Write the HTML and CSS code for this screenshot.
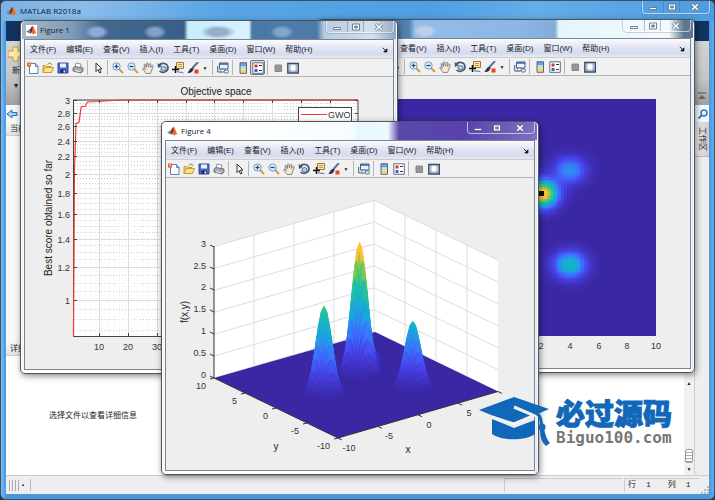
FILE: index.html
```html
<!DOCTYPE html>
<html lang="zh-CN">
<head>
<meta charset="utf-8">
<title>MATLAB R2018a</title>
<link rel="stylesheet" href="styles.css">
</head>
<body>
<svg class="sprite" aria-hidden="true">
  <symbol id="logo" viewBox="0 0 12 12"><path d="M0 7l3.500-1.800L5.500 7 3.500 9z" fill="#3f8fc0"/><path d="M3.500 5.200C5 4.500 6 1 7 1c1 0 1.500 3 1 4.500L5.500 9 3.500 9l1.500-2z" fill="#8c2418"/><path d="M7 1c1.500 0 2.500 5 5 8.500-2-1-3-.5-4 1.500C7.500 9.500 7 8.500 5.500 9 7.500 7 7 4 7 1z" fill="#e8702a"/></symbol>
  <symbol id="new" viewBox="0 0 12 12"><path d="M2.500 1.500h6l2.500 2.500v7.500h-8.500z" fill="#fff" stroke="#5b82b5"/><path d="M8.500 1.500v3h2.500" fill="#cfe0f4" stroke="#5b82b5"/><path d="M0 .5h4v4h-4z" fill="#e8603c"/><path d="M1.500 1.500h1.500v1.500h-1.500z" fill="#ffd76a"/></symbol>
  <symbol id="open" viewBox="0 0 12 12"><path d="M1 10.500v-7h3l1 1h4v2" fill="#f6d36b" stroke="#c99a2e"/><path d="M1 10.500l2-5h8.500l-2 5z" fill="#ffe58a" stroke="#c99a2e"/><path d="M5.500 2.500c2-2 4-1.500 4.500.5" fill="none" stroke="#5a8b46"/></symbol>
  <symbol id="save" viewBox="0 0 12 12"><path d="M1 1h10v10h-10z" fill="#4a68c8" stroke="#3448a0"/><path d="M3 1.500h6v4h-6z" fill="#e8f0fb"/><path d="M3.500 7.500h5v3.500h-5z" fill="#1d2758"/><path d="M6.500 8.500h1.500v2h-1.500z" fill="#fff"/></symbol>
  <symbol id="print" viewBox="0 0 12 12"><path d="M3 5l1-4 5 1-.5 4" fill="#fff" stroke="#8b8f97"/><path d="M1 6l2-1.500 8 1.500v3l-2 2-8-2z" fill="#a8acb2" stroke="#6e7278"/><path d="M3 8.500l5 1.200" stroke="#eee"/></symbol>
  <symbol id="arrow" viewBox="0 0 12 12"><path d="M4 1v8.500l2-2 1.500 3.500 1.500-.7-1.500-3.300h2.500z" fill="#fff" stroke="#333"/></symbol>
  <symbol id="zin" viewBox="0 0 12 12"><path d="M7 7l4 4" stroke="#d99a3a" stroke-width="2"/><circle cx="4.500" cy="4.500" r="3.700" fill="#d5ecfb" stroke="#6da0cf"/><path d="M2.500 4.500h4M4.500 2.500v4" stroke="#24406e" stroke-width="1.200"/></symbol>
  <symbol id="zout" viewBox="0 0 12 12"><path d="M7 7l4 4" stroke="#d99a3a" stroke-width="2"/><circle cx="4.500" cy="4.500" r="3.700" fill="#d5ecfb" stroke="#6da0cf"/><path d="M2.500 4.500h4" stroke="#24406e" stroke-width="1.200"/></symbol>
  <symbol id="pan" viewBox="0 0 12 12"><path d="M4 11.500L.8 7c-.3-1 1-1 1.400-.4l1 1L2 3c0-1 1.200-1 1.400 0l1 2.500L4.500 1.500c0-1 1.500-1 1.500 0l.3 3.500L7.500 2c.4-1 1.600-.6 1.400.2L8.400 5.500l1.500-2c.6-.7 1.500 0 1.200.7L9.500 9l-1 2.500z" fill="#fbe6c8" stroke="#64728c" stroke-width=".8"/></symbol>
  <symbol id="rot" viewBox="0 0 12 12"><path d="M2 3.500C4.500 0 10.500 1 11 5.500c.3 4-5 6.500-8.500 3.500" fill="none" stroke="#3c5878" stroke-width="1.600"/><path d="M.5 1l.5 5 4-2z" fill="#3c5878"/><path d="M4 5.500l2.500-1 2.500 1v2.500l-2.500 1-2.500-1z" fill="#bccede" stroke="#3c5878" stroke-width=".8"/></symbol>
  <symbol id="cursor" viewBox="0 0 12 12"><path d="M4.500.5h7v6h-7z" fill="#ffe7a0" stroke="#9b7a3c"/><path d="M6 2.500h4M6 4.500h4" stroke="#9b7a3c" stroke-width=".7"/><path d="M0 7.500h7M3.500 4v7" stroke="#111" stroke-width="1.500"/><path d="M5 9.500c3 1.500 5 0 6.500 1.500" fill="none" stroke="#4865c8"/></symbol>
  <symbol id="brush" viewBox="0 0 12 12"><path d="M11 0L5.500 6" stroke="#5a7398" stroke-width="2"/><path d="M6.500 6C4 4.500 2 8 .5 11c2.500.3 6-1 6-5z" fill="#273250"/><path d="M7.500 7.500h4v4h-4z" fill="#f0421c"/></symbol>
  <symbol id="link" viewBox="0 0 12 12"><path d="M2.500 1h8.500v6h-8.500z" fill="#e9f2fc" stroke="#3f5f8d"/><path d="M2.500 2h8.500" stroke="#3f5f8d" stroke-width="1.500"/><path d="M.7 4v6h5" fill="none" stroke="#3f5f8d"/><rect x="3.500" y="7" width="4" height="3" rx="1.500" fill="#fff" stroke="#566e88"/><rect x="7" y="8" width="4.500" height="3" rx="1.500" fill="none" stroke="#566e88"/></symbol>
  <symbol id="cbar" viewBox="0 0 12 12"><path d="M3 1h6.500v3.500h-6.500z" fill="#749dd8"/><path d="M3 4.500h6.500v3h-6.500z" fill="#b9e2d8"/><path d="M3 7.500h6.500v3.500h-6.500z" fill="#ffd467"/><path d="M3 .7h6.500v10.600h-6.500z" fill="none" stroke="#52668c"/></symbol>
  <symbol id="legend" viewBox="0 0 12 12"><path d="M.8.800h10.500v10.500h-10.500z" fill="#fff" stroke="#5a6e95"/><path d="M2.500 2.500h3v3h-3z" fill="#d43b30"/><path d="M2.500 7h3v3h-3z" fill="#3e5fb8"/><path d="M7 3.500h3M7 8.500h3" stroke="#333"/></symbol>
  <symbol id="hide" viewBox="0 0 12 12"><path d="M3 3h6.500v6.500h-6.500z" fill="#989898" stroke="#868686"/></symbol>
  <symbol id="dock" viewBox="0 0 12 12"><path d="M.8 1.500h10.500v9.500h-10.500z" fill="#dbe6f2" stroke="#34496b" stroke-width="1.400"/><path d="M3 2v8M9 2v8M1 9h10" stroke="#6c84a6" stroke-width=".8"/><path d="M3.500 3.500h5v5h-5z" fill="#fff"/></symbol>
  <symbol id="min" viewBox="0 0 10 8"><path d="M1.500 4.500h7v2h-7z" fill="#fff" stroke="#566579" stroke-width=".8"/></symbol>
  <symbol id="max" viewBox="0 0 10 8"><path d="M1.500 1h7v6h-7z" fill="#fff" stroke="#566579" stroke-width=".8"/><path d="M3.700 3h2.600v2h-2.600z" fill="#9ab" stroke="#566579" stroke-width=".8"/></symbol>
  <symbol id="close" viewBox="0 0 10 8"><path d="M2 1.200l6 5.600M8 1.200L2 6.800" stroke="#566579" stroke-width="2.800"/><path d="M2.200 1.400l5.600 5.200M7.800 1.400L2.200 6.600" stroke="#fff" stroke-width="1.500"/></symbol>
  <symbol id="pin" viewBox="0 0 8 8"><path d="M1 1l4 4M6.500 2.500v4h-4z" stroke="#111" fill="#111" stroke-width="1.200"/></symbol>
</svg>

<div class="app">
  <header class="app-title">
    <svg class="ico"><use href="#logo"/></svg>
    <h1>MATLAB R2018a</h1>
    <div class="caption"><button aria-label="最小化"><svg><use href="#min"/></svg></button><button aria-label="最大化"><svg><use href="#max"/></svg></button><button aria-label="关闭"><svg><use href="#close"/></svg></button></div>
  </header>
  <div class="ribbon-tabs"></div>
  <div class="ribbon">
    <button class="new-btn"><svg viewBox="0 0 16 16"><path d="M5 1h5v4h5v6h-5v4h-5v-4h-5v-6h5z" fill="#ffe9a5" stroke="#c2984a"/></svg>新<span>▾</span></button>
    <button class="collapse" aria-label="折叠工具条"><svg viewBox="0 0 8 8"><path d="M0 1h8" stroke="#666" stroke-width="1.300"/><path d="M4 3l4 4h-8z" fill="#666"/></svg></button>
  </div>
  <div class="address">
    <button aria-label="后退"><svg viewBox="0 0 12 10"><path d="M1 5l5-4v2.500h5v3h-5v2.500z" fill="#a6d3f7" stroke="#2d6ba8"/></svg></button>
    <button aria-label="搜索"><svg viewBox="0 0 12 10"><circle cx="7" cy="4" r="3" fill="#e4f3ff" stroke="#2f7bc4" stroke-width="1.500"/><path d="M5 6L1.500 9.500" stroke="#2f7bc4" stroke-width="2"/></svg></button>
  </div>
  <div class="work">
    <aside class="files">
      <h2>当前</h2>
      <div class="file-list"></div>
      <h2 class="detail-head">详细</h2>
      <p class="detail">选择文件以查看详细信息</p>
    </aside>
    <main class="editor"></main>
    <div class="scroll"><span>▲</span><i></i><span>▼</span></div>
    <nav class="side"><button>工作区</button></nav>
  </div>
  <footer class="status">
    <span class="grip"></span><span class="up">▲</span>
    <span class="cell msg"></span>
    <span class="cell pos"><span>行</span><span>1</span><span>列</span><span>1</span></span>
    <svg class="size-grip" viewBox="0 0 8 8"><path d="M6 0h2v2h-2zM3 3h2v2h-2zM6 3h2v2h-2zM0 6h2v2h-2zM3 6h2v2h-2zM6 6h2v2h-2z" fill="#bbb"/></svg>
  </footer>
</div>

<section class="win win-map">
  <header class="win-title"><div class="caption"><button aria-label="最小化"><svg><use href="#min"/></svg></button><button aria-label="最大化"><svg><use href="#max"/></svg></button><button aria-label="关闭"><svg><use href="#close"/></svg></button></div></header>
  <div class="client">
    <nav class="menu"><button>文件(F)</button><button>编辑(E)</button><button>查看(V)</button><button>插入(I)</button><button>工具(T)</button><button>桌面(D)</button><button>窗口(W)</button><button>帮助(H)</button><svg class="pin"><use href="#pin"/></svg></nav>
    <div class="tools"></div>
    <svg class="plot" id="map" viewBox="322 76 368 292"><rect x="369" y="99" width="287" height="237" fill="#3a27a3"/><g class="cells" shape-rendering="crispEdges"></g><rect x="539" y="191" width="5" height="5" fill="#111"/><g class="ticks"></g></svg>
  </div>
</section>

<section class="win win-curve">
  <header class="win-title"><svg class="ico"><use href="#logo"/></svg><h2>Figure 1</h2><div class="caption"><button aria-label="最小化"><svg><use href="#min"/></svg></button><button aria-label="最大化"><svg><use href="#max"/></svg></button><button aria-label="关闭"><svg><use href="#close"/></svg></button></div></header>
  <div class="client">
    <nav class="menu"><button>文件(F)</button><button>编辑(E)</button><button>查看(V)</button><button>插入(I)</button><button>工具(T)</button><button>桌面(D)</button><button>窗口(W)</button><button>帮助(H)</button><svg class="pin"><use href="#pin"/></svg></nav>
    <div class="tools legend-on"></div>
    <svg class="plot" id="curve" viewBox="25 77 368 292">
      <rect x="73" y="100" width="285" height="236" fill="#fff"/>
      <g class="grid"></g>
      <path d="M73.500 100v236.500H358V100z" fill="none" stroke="#444"/>
      <path d="M73.500 336L74.500 170 76 123.500 79 122.500 81 108 82 106.500h3L87.500 102l11-.5 22-1.500H358" fill="none" stroke="#f23b30" stroke-width="1.200"/>
      <g class="ticks"></g>
      <text class="label" x="216" y="95" text-anchor="middle">Objective space</text>
      <text class="label" transform="translate(52 218) rotate(-90)" text-anchor="middle">Best score obtained so far</text>
      <rect x="298.500" y="107.500" width="53" height="15" fill="#fff" stroke="#444"/>
      <path d="M301 114.500h26" stroke="#f23b30"/>
      <text x="328" y="118">GWO</text>
    </svg>
  </div>
</section>

<section class="win win-surf">
  <header class="win-title"><svg class="ico"><use href="#logo"/></svg><h2>Figure 4</h2><div class="caption"><button aria-label="最小化"><svg><use href="#min"/></svg></button><button aria-label="最大化"><svg><use href="#max"/></svg></button><button aria-label="关闭"><svg><use href="#close"/></svg></button></div></header>
  <div class="client">
    <nav class="menu"><button>文件(F)</button><button>编辑(E)</button><button>查看(V)</button><button>插入(I)</button><button>工具(T)</button><button>桌面(D)</button><button>窗口(W)</button><button>帮助(H)</button><svg class="pin"><use href="#pin"/></svg></nav>
    <div class="tools"></div>
    <svg class="plot" id="surf" viewBox="166 178 368 292">
      <path d="M214 246.500L375 201l123 59v131.500L375 332l-161 46z" fill="#fff"/>
      <g class="grid"></g>
      <path d="M214 378L338 438l160-46.500L375 332z" fill="#3a27a3"/>
      <g class="cells"></g>
      <path d="M214 246v132L338 438l160-46.500" fill="none" stroke="#333"/>
      <g class="ticks"></g>
      <text class="label" transform="translate(188 312) rotate(-90)" text-anchor="middle">f(x,y)</text>
      <text class="label" x="276" y="450" text-anchor="middle">y</text>
      <text class="label" x="408" y="453" text-anchor="middle">x</text>
    </svg>
  </div>
</section>

<div class="brand">
  <svg viewBox="0 0 72 52"><path d="M0 14L35 1l35 12-35 15.500z" fill="#1268b8"/><path d="M13 23l22 9 21-8v14c-9 7-34 7-43 0z" fill="#1268b8"/><path d="M35 11l20 8.500-20 8.500-22-7" fill="none" stroke="#f2f2f2" stroke-width="3"/><path d="M54 16c6 1 8 5 8.500 12" fill="none" stroke="#1268b8" stroke-width="3"/><circle cx="63" cy="31" r="3.500" fill="#1268b8"/><path d="M61 32h4c1 6 3 12 6 15l-4 3c-5-4-6-11-6-18z" fill="#1268b8"/></svg>
  <div><strong>必过源码</strong><span>Biguo100.com</span></div>
</div>
<script src="plots.js"></script>
</body>
</html>
```
FILE: styles.css
```css
* { box-sizing: border-box; }
body {
  margin: 0;
  position: relative;
  min-height: 100vh;
  overflow: hidden;
  background: #2b3a4a;
  color: #222;
  font: 8px/12px "Liberation Sans", "Noto Sans CJK SC", sans-serif;
}
h1, h2, p { margin: 0; font-weight: 400; }
button {
  margin: 0;
  padding: 0;
  border: 0;
  background: none;
  color: inherit;
  font: inherit;
}
svg { display: block; }
.sprite { position: absolute; width: 0; height: 0; }
.ico { width: 11px; height: 11px; flex: none; }

/* Main application window */
.app {
  display: flex;
  flex-direction: column;
  height: 100vh;
  padding: 0 5px 5px;
  border: 1px solid #3a5068;
  border-radius: 6px;
  background: linear-gradient(90deg, #7cbcf0, #4796de 5px, #4796de calc(100% - 5px), #63b0f0);
}
.app-title {
  display: flex;
  align-items: center;
  gap: 3px;
  height: 20px;
  margin: 0 -5px;
  padding-left: 5px;
  flex: none;
  border-radius: 5px 5px 0 0;
  background: linear-gradient(100deg, #79b2e4, #8bbcea 12%, #5aa5e4 30%, #4f9fe2 60%, #64ade8 75%, #4d9be0);
}
.app-title h1, .win-title h2 { font: 8px/12px "Open Sans", "Noto Sans CJK SC", sans-serif; color: #14202c; }
.caption {
  display: flex;
  align-self: flex-start;
  margin-left: auto;
  height: 13px;
  border: 1px solid #ffffff99;
  border-top: 0;
  border-radius: 0 0 4px 4px;
  outline: 1px solid #4d678544;
}
.caption button { display: flex; align-items: center; justify-content: center; width: 20px; }
.caption button + button { width: 16px; border-left: 1px solid #4d678566; }
.caption button:last-child { width: 30px; }
.caption svg { width: 10px; height: 8px; }
.app-title .caption { margin-right: 4px; }

.ribbon-tabs { height: 20px; flex: none; background: #12325f; }
.ribbon {
  display: flex;
  justify-content: space-between;
  height: 64px;
  flex: none;
  background: linear-gradient(#d4d4d4, #c4c4c4 60%, #a0a0a0);
}
.new-btn { display: flex; flex-direction: column; align-items: center; gap: 3px; width: 20px; padding-top: 5px; }
.new-btn svg { width: 16px; height: 16px; }
.collapse { align-self: flex-end; width: 13px; padding: 0 2px 5px; }
.collapse svg { width: 8px; height: 8px; }
.address { display: flex; justify-content: space-between; align-items: center; height: 17px; flex: none; background: #f5f8fb; }
.address svg { width: 12px; height: 10px; }
.work { display: flex; flex: 1; min-height: 0; background: #fff; }
.files { display: flex; flex-direction: column; width: 174px; }
.files h2 { height: 14px; padding: 0 4px; font-size: 8px; line-height: 13px; border-bottom: 1px solid #ccc; background: linear-gradient(#f8f8f8, #e2e2e2); }
.file-list { flex: 1; background: #f9f9f9; }
.detail { height: 119px; padding-top: 53px; text-align: center; line-height: 14px; }
.editor { flex: 1; }
.scroll {
  display: flex;
  flex-direction: column;
  justify-content: flex-end;
  width: 11px;
  font-size: 5px;
  text-align: center;
  background: #f1f1f1;
  border-right: 1px solid #ccc;
}
.scroll span:first-child { margin-bottom: 60px; }
.scroll i { height: 14px; margin: 0 1px; border: 1px solid #999; border-radius: 2px; background: repeating-linear-gradient(#fff 0 2px, #aaa 2px 3px); }
.side { width: 14px; background: #eee; }
.side button {
  width: 14px;
  height: 35px;
  border-bottom: 1px solid #bbb;
  background: linear-gradient(90deg, #eee, #ccc);
  writing-mode: vertical-rl;
  text-orientation: sideways;
}
.status { display: flex; align-items: center; gap: 2px; height: 19px; flex: none; padding-left: 3px; border-top: 1px solid #ccc; background: #eee; }
.grip { width: 10px; height: 11px; background: repeating-linear-gradient(90deg, #aaa 0 1px, #eee 1px 3px); }
.up { padding-right: 5px; border-right: 1px solid #bbb; font-size: 4px; }
.cell { height: 14px; border: 1px solid #ccc; border-width: 1px 0 0 1px; }
.msg { width: 118px; margin-left: auto; }
.pos { display: flex; gap: 10px; width: 75px; padding-left: 3px; font-family: "Liberation Mono", "Noto Sans CJK SC", monospace; }
.pos span:nth-child(3) { margin-left: 7px; }
.size-grip { width: 8px; height: 8px; align-self: flex-end; }

/* Figure windows floating on the desktop */
.win {
  position: absolute;
  width: 378px;
  padding: 0 4px 4px;
  border: 1px solid #4c5560;
  border-radius: 5px;
  background: linear-gradient(90deg, #eef4f8, #fff 5px, #fff calc(100% - 5px), #d8e6f2);
  box-shadow: 1px 2px 6px #0007, inset 0 0 0 1px #ffffffb0;
}
.win-curve { left: 20px; top: 20px; }
.win-map { left: 317px; top: 19px; }
.win-surf { left: 161px; top: 121px; }
.win-title {
  display: flex;
  align-items: center;
  gap: 3px;
  height: 18px;
  margin: 0 -3px;
  padding-left: 4px;
  border-radius: 4px 4px 0 0;
}
.win-title .ico { background: #fff; }
.win-title .caption { height: 12px; margin-right: 2px; }
.win-curve .win-title {
  background:
    radial-gradient(ellipse 12px 7px at 75px 11px, #8fabd6 50%, transparent),
    radial-gradient(ellipse 12px 7px at 133px 11px, #82a0c4 50%, transparent),
    radial-gradient(ellipse 18px 7px at 196px 11px, #97aecb 50%, transparent),
    radial-gradient(ellipse 12px 7px at 260px 11px, #84a6ca 50%, transparent),
    linear-gradient(90deg, #a6b7c8, #7f9cba 50px, #42698f 80px, #385f8a 162px, #c8edfc 166px, #d9f2fd 227px, #4a79a8 230px, #4d7ba9 295px, #b7cbe0 302px, #d5e0ec 350px, #91a9c4);
}
.win-map .win-title {
  background:
    radial-gradient(ellipse 12px 7px at 106px 11px, #bfd0e6 50%, transparent),
    linear-gradient(90deg, #4f82b2 90px, #93bde8 96px, #8bb7e5 200px, #82add9 236px, #e3f5fc 240px, #f5fafc 350px, #5b7691 365px);
}
.win-surf .win-title { background: linear-gradient(90deg, #fff 80px, #f6fbfc 190px, #e7f8fd 195px, #eefafd 225px, #5a49a9 236px, #5941ad 300px, #806fc4); }
.client { border: 1px solid #7c848c; background: #eee; margin: 0 -1px -1px; }
.menu {
  display: flex;
  align-items: center;
  gap: 10px;
  height: 18px;
  padding: 1px 5px 0;
  background: linear-gradient(#fafbfe, #dfe3f3 50%, #d5dbee 80%, #e6e9f5);
  white-space: nowrap;
}
.pin { width: 6px; height: 6px; margin-left: auto; }
.tools { display: flex; align-items: center; height: 19px; border-top: 1px solid #ccc; border-bottom: 1px solid #b4b4b4; background: #f1f1f1; }
.tools button { display: flex; align-items: center; justify-content: center; width: 15px; height: 15px; flex: none; }
.tools svg { width: 12px; height: 12px; }
.tools .drop { width: 10px; font-size: 5px; }
.tools i { width: 1px; height: 15px; margin: 0 2px; background: #b5b5b5; }
.legend-on [aria-label="图例"] { border: 1px solid #777; border-radius: 2px; background: #ddd; }
.plot { width: 100%; height: auto; font: 9px "Liberation Sans", Arial, sans-serif; fill: none; }
.plot text { fill: #333; }
.plot .label { font-size: 10px; fill: #222; }

/* Site watermark */
.brand { position: absolute; left: 479px; top: 396px; display: flex; gap: 5px; }
.brand svg { width: 72px; height: 52px; }
.brand div { display: flex; flex-direction: column; }
.brand strong { font: 900 29px/32px "Noto Sans CJK SC", sans-serif; color: #1268b8; -webkit-text-stroke: 1px #1268b8; }
.brand span { margin-top: 1px; font: 700 16px/18px "DejaVu Sans Mono", monospace; color: #777; }
```
FILE: plots.js
```js
const NS = 'http://www.w3.org/2000/svg';

function add(parent, tag, attrs, text) {
  const el = document.createElementNS(NS, tag);
  for (const key in attrs) el.setAttribute(key, attrs[key]);
  if (text !== undefined) el.textContent = text;
  parent.appendChild(el);
}

// Toolbars
const TOOLS = [['new', '新建'], ['open', '打开'], ['save', '保存'], ['print', '打印'], null,
  ['arrow', '选择'], null, ['zin', '放大'], ['zout', '缩小'], ['pan', '平移'], ['rot', '旋转'],
  ['cursor', '数据游标'], ['brush', '刷亮'], 'drop', null, ['link', '链接'], null,
  ['cbar', '颜色栏'], ['legend', '图例'], null, ['hide', '隐藏'], ['dock', '停靠']];
document.querySelectorAll('.tools').forEach(bar => {
  bar.innerHTML = TOOLS.map(t => {
    if (!t) return '<i></i>';
    if (t === 'drop') return '<button class="drop" aria-label="更多">▼</button>';
    return `<button aria-label="${t[1]}"><svg><use href="#${t[0]}"/></svg></button>`;
  }).join('');
});

// Objective function: a sum of four Gaussian peaks
const PEAKS = [[2, 2, 3], [-4, 0, 2], [4, -4, 1.5], [4, 4, 1]];
const f = (x, y) => PEAKS.reduce((s, [a, b, h]) => s + h * Math.exp(-0.85 * ((x - a) ** 2 + (y - b) ** 2)), 0);

const STOPS = [[0, 58, 39, 163], [.14, 71, 67, 232], [.25, 62, 110, 254], [.35, 39, 151, 235],
  [.45, 18, 177, 207], [.55, 25, 190, 175], [.66, 75, 200, 115], [.78, 160, 198, 60], [.84, 253, 190, 60], [1, 255, 200, 55]];
function parula(v) {
  const t = Math.min(v / 3, 1);
  let i = 1;
  while (i < STOPS.length - 1 && STOPS[i][0] < t) i++;
  const a = STOPS[i - 1], b = STOPS[i], k = (t - a[0]) / (b[0] - a[0]);
  return `rgb(${[1, 2, 3].map(c => Math.round(a[c] + (b[c] - a[c]) * k)).join()})`;
}

// Heat map
const map = document.querySelector('#map .cells');
const D = 0.2;
for (let i = 0; i < 100; i++) {
  for (let j = 0; j < 100; j++) {
    const x = -10 + i * D, y = -10 + j * D, v = f(x + D / 2, y + D / 2);
    if (v > 0.02) add(map, 'rect', { x: 512.5 + x * 14.35, y: 217.5 - (y + D) * 11.85, width: 2.9, height: 2.4, fill: parula(v) });
  }
}
const mapTicks = document.querySelector('#map .ticks');
for (let x = -10; x <= 10; x += 2) {
  add(mapTicks, 'text', { x: Math.round(512.5 + x * 14.35), y: 349, 'text-anchor': 'middle' }, x);
}

// Convergence curve on a logarithmic axis
const grid = document.querySelector('#curve .grid');
const ticks = document.querySelector('#curve .ticks');
const ly = v => 300 - 200 * Math.log(v) / Math.log(3);
for (let k = 17; k < 60; k++) {
  add(grid, 'path', { d: `M74 ${Math.round(ly(k / 20)) + .5}H358`, stroke: '#ccc', 'stroke-dasharray': '1 2' });
}
for (let k = 1; k < 100; k += 2) {
  const x = Math.round(70.3 + k * 2.88) + .5;
  add(grid, 'path', { d: `M${x} 100V336`, stroke: '#eee', 'stroke-dasharray': '1 2' });
}
for (let k = 10; k <= 30; k += 2) {
  const y = Math.round(ly(k / 10));
  add(grid, 'path', { d: `M74 ${y + .5}H358`, stroke: '#ddd' });
  add(ticks, 'path', { d: `M74 ${y + .5}h3M358 ${y + .5}h-3`, stroke: '#444' });
  add(ticks, 'text', { x: 70, y: y + 4, 'text-anchor': 'end' }, k / 10);
}
for (let k = 10; k < 100; k += 10) {
  const x = Math.round(70.3 + k * 2.88);
  add(grid, 'path', { d: `M${x + .5} 100V336`, stroke: '#ddd' });
  add(ticks, 'path', { d: `M${x + .5} 336v-3M${x + .5} 100v3`, stroke: '#444' });
  add(ticks, 'text', { x, y: 350, 'text-anchor': 'middle' }, k);
}

// Surface plot
const P = (x, y, z) => [338 + (x + 10) * 8 - (y + 10) * 6.2, 438 - (x + 10) * 2.325 - (y + 10) * 3 - z * 43.8];
const seg = (a, b) => 'M' + a.map(n => n.toFixed(1)) + 'L' + b.map(n => n.toFixed(1));
const walls = document.querySelector('#surf .grid');
for (let z = 0; z <= 3; z += .5) {
  add(walls, 'path', { d: seg(P(-10, 10, z), P(10, 10, z)) + seg(P(10, 10, z), P(10, -10, z)), stroke: '#ddd' });
}
for (let k = -5; k <= 10; k += 5) {
  add(walls, 'path', { d: seg(P(k, 10, 0), P(k, 10, 3)) + (k < 10 ? seg(P(10, k, 0), P(10, k, 3)) : ''), stroke: '#ddd' });
}
const surf = document.querySelector('#surf .cells');
for (let i = 99; i >= 0; i--) {
  for (let j = 99; j >= 0; j--) {
    const x = -10 + i * D, y = -10 + j * D;
    const v = [[x, y], [x + D, y], [x + D, y + D], [x, y + D]];
    const z = v.map(p => f(...p));
    if (Math.max(...z) < 0.02) continue;
    const fill = parula(z[0]);
    add(surf, 'polygon', {
      points: v.map((p, n) => P(p[0], p[1], z[n]).map(c => c.toFixed(1)).join()).join(' '),
      fill, stroke: fill, 'stroke-width': .5
    });
  }
}
const st = document.querySelector('#surf .ticks');
for (let z = 0; z <= 3; z += .5) {
  const y = Math.round(378 - z * 43.8);
  add(st, 'path', { d: `M214 ${y}l-4 -2`, stroke: '#333' });
  add(st, 'text', { x: 206, y, 'text-anchor': 'end' }, z);
}
for (let k = -10; k <= 10; k += 5) {
  const [ax, ay] = P(-10, k, 0), [bx, by] = P(k, -10, 0);
  add(st, 'path', { d: `M${ax} ${ay}l-4 1M${bx} ${by}l4 2`, stroke: '#333' });
  add(st, 'text', { x: Math.round(ax) - 8, y: Math.round(ay) + 11, 'text-anchor': 'end' }, k);
  if (k < 10) add(st, 'text', { x: Math.round(bx) + 11, y: Math.round(by) + 13, 'text-anchor': 'middle' }, k);
}
```
